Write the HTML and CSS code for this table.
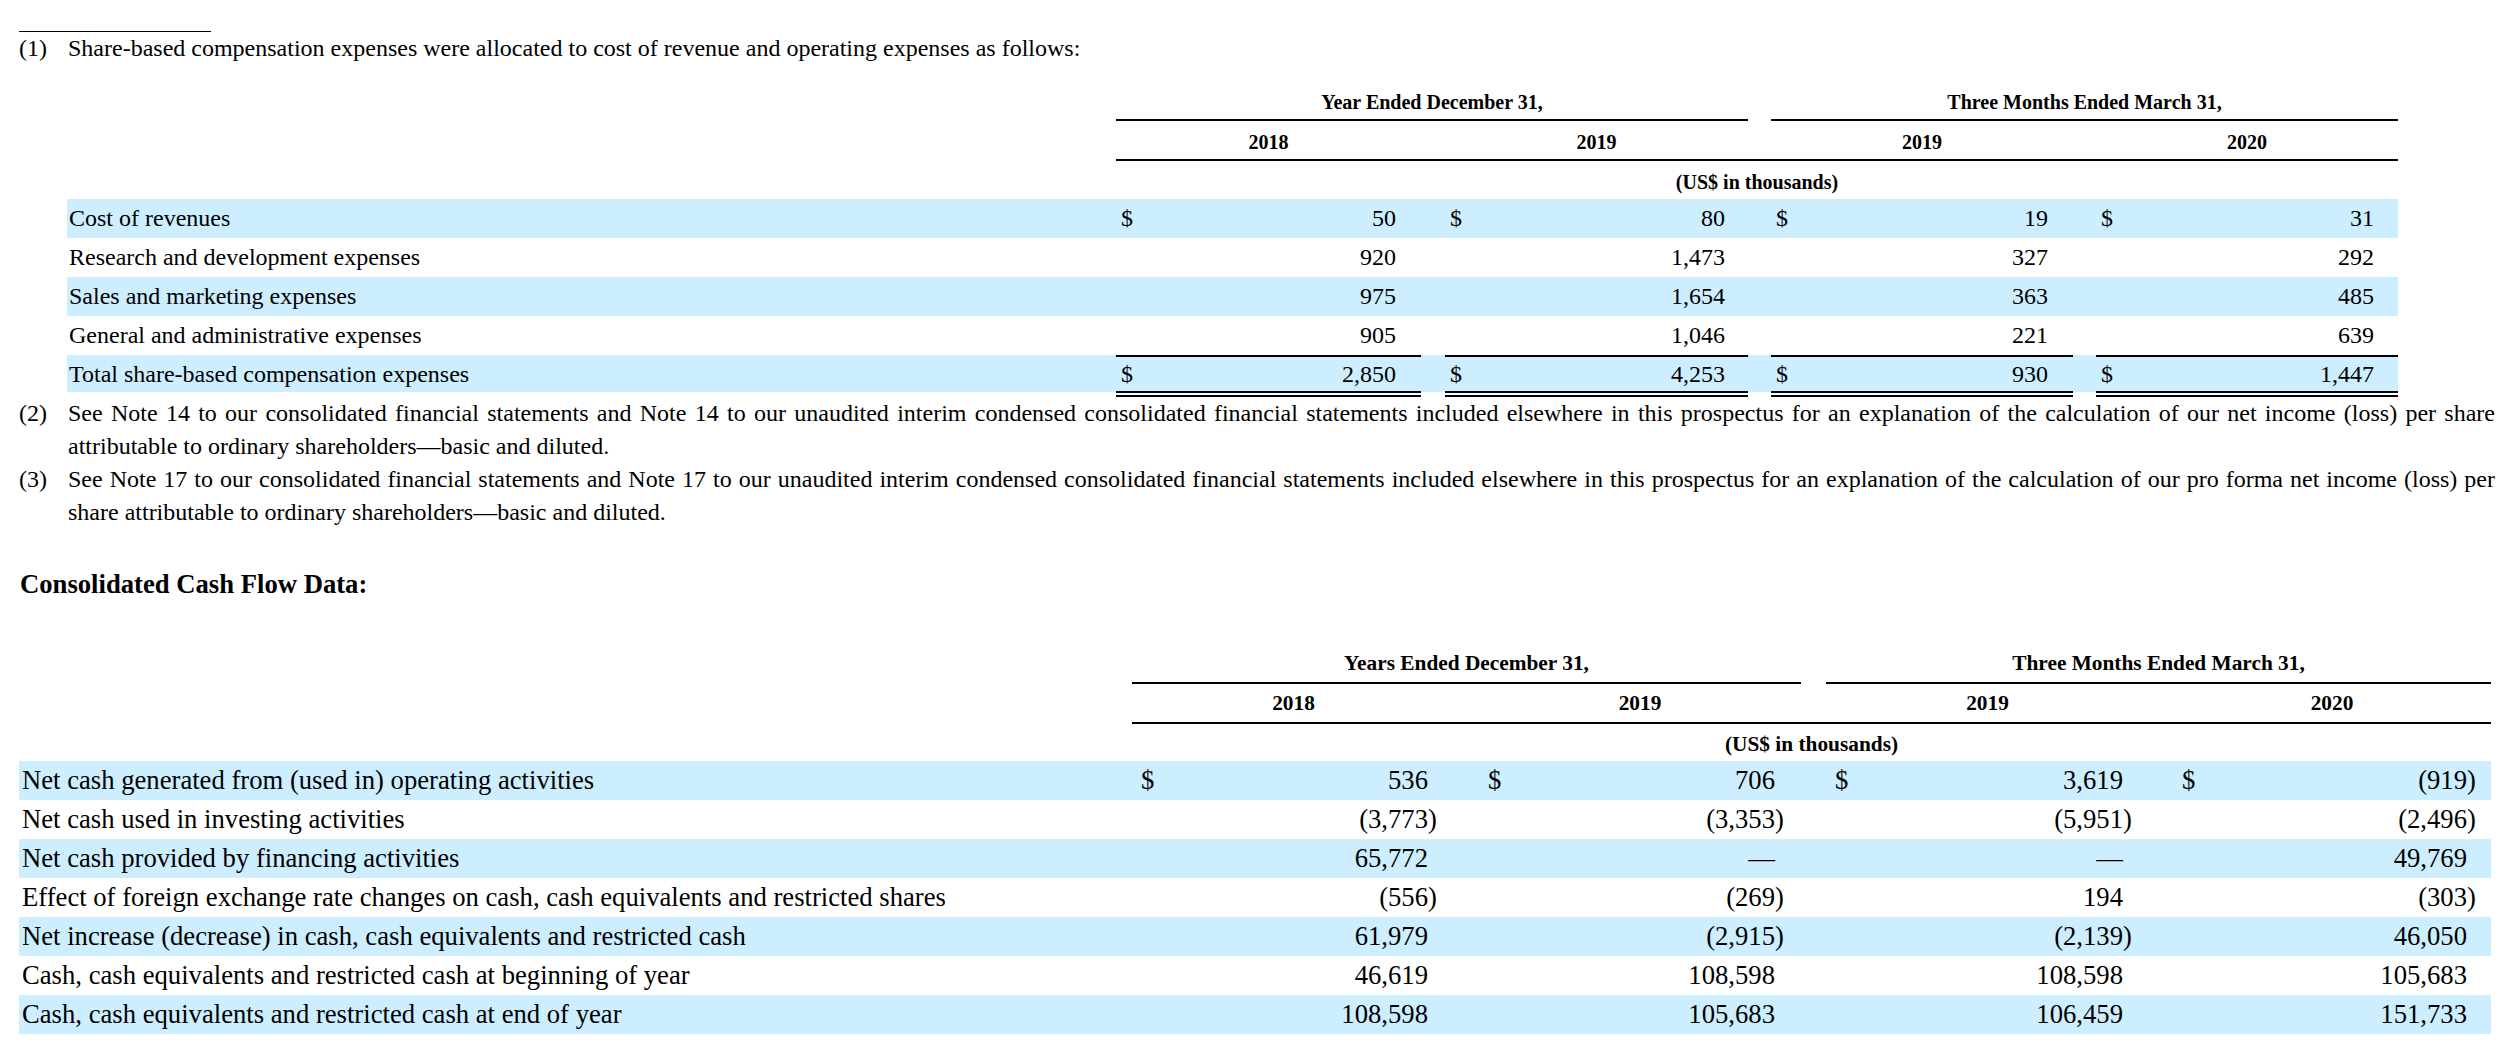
FILE: index.html
```html
<!DOCTYPE html>
<html>
<head>
<meta charset="utf-8">
<link rel="stylesheet" href="styles.css">
</head>
<body>
<div class="page">
  <div class="rule-short"></div>
  <div class="note"><div class="num">(1)</div><div class="txt">Share-based compensation expenses were allocated to cost of revenue and operating expenses as follows:</div></div>

  <div class="fin t1">
    <div class="row hrow">
      <div class="lbl"></div>
      <div class="hd g1">Year Ended December 31,</div>
      <div class="hd g2">Three Months Ended March 31,</div>
    </div>
    <div class="row hrow">
      <div class="lbl"></div>
      <div class="hd yr y1">2018</div><div class="hd yr"></div>
      <div class="hd yr y2">2019</div><div class="hd yr"></div>
      <div class="hd yr y3">2019</div><div class="hd yr"></div>
      <div class="hd yr y4">2020</div>
    </div>
    <div class="row urow">
      <div class="lbl"></div>
      <div class="hd all">(US$ in thousands)</div>
    </div>
    <div class="row band">
      <div class="lbl">Cost of revenues</div>
      <div class="amt"><span>$</span><span>50</span></div><div class="par"></div><div class="sp"></div>
      <div class="amt"><span>$</span><span>80</span></div><div class="par"></div><div class="sp"></div>
      <div class="amt"><span>$</span><span>19</span></div><div class="par"></div><div class="sp"></div>
      <div class="amt"><span>$</span><span>31</span></div><div class="par"></div>
    </div>
    <div class="row">
      <div class="lbl">Research and development expenses</div>
      <div class="amt"><span></span><span>920</span></div><div class="par"></div><div class="sp"></div>
      <div class="amt"><span></span><span>1,473</span></div><div class="par"></div><div class="sp"></div>
      <div class="amt"><span></span><span>327</span></div><div class="par"></div><div class="sp"></div>
      <div class="amt"><span></span><span>292</span></div><div class="par"></div>
    </div>
    <div class="row band">
      <div class="lbl">Sales and marketing expenses</div>
      <div class="amt"><span></span><span>975</span></div><div class="par"></div><div class="sp"></div>
      <div class="amt"><span></span><span>1,654</span></div><div class="par"></div><div class="sp"></div>
      <div class="amt"><span></span><span>363</span></div><div class="par"></div><div class="sp"></div>
      <div class="amt"><span></span><span>485</span></div><div class="par"></div>
    </div>
    <div class="row">
      <div class="lbl">General and administrative expenses</div>
      <div class="amt"><span></span><span>905</span></div><div class="par"></div><div class="sp"></div>
      <div class="amt"><span></span><span>1,046</span></div><div class="par"></div><div class="sp"></div>
      <div class="amt"><span></span><span>221</span></div><div class="par"></div><div class="sp"></div>
      <div class="amt"><span></span><span>639</span></div><div class="par"></div>
    </div>
    <div class="row band total">
      <div class="lbl">Total share-based compensation expenses</div>
      <div class="amt tot"><span>$</span><span>2,850</span></div><div class="par tot"></div><div class="sp"></div>
      <div class="amt tot"><span>$</span><span>4,253</span></div><div class="par tot"></div><div class="sp"></div>
      <div class="amt tot"><span>$</span><span>930</span></div><div class="par tot"></div><div class="sp"></div>
      <div class="amt tot"><span>$</span><span>1,447</span></div><div class="par tot"></div>
    </div>
  </div>

  <div class="note"><div class="num">(2)</div><div class="txt">See Note 14 to our consolidated financial statements and Note 14 to our unaudited interim condensed consolidated financial statements included elsewhere in this prospectus for an explanation of the calculation of our net income (loss) per share attributable to ordinary shareholders—basic and diluted.</div></div>
  <div class="note"><div class="num">(3)</div><div class="txt">See Note 17 to our consolidated financial statements and Note 17 to our unaudited interim condensed consolidated financial statements included elsewhere in this prospectus for an explanation of the calculation of our pro forma net income (loss) per share attributable to ordinary shareholders—basic and diluted.</div></div>

  <div class="section-title">Consolidated Cash Flow Data:</div>

  <div class="fin t2">
    <div class="row hrow">
      <div class="lbl"></div>
      <div class="hd g1">Years Ended December 31,</div>
      <div class="hd g2">Three Months Ended March 31,</div>
    </div>
    <div class="row hrow">
      <div class="lbl"></div>
      <div class="hd yr y1">2018</div><div class="hd yr"></div>
      <div class="hd yr y2">2019</div><div class="hd yr"></div>
      <div class="hd yr y3">2019</div><div class="hd yr"></div>
      <div class="hd yr y4">2020</div>
    </div>
    <div class="row urow">
      <div class="lbl"></div>
      <div class="hd all">(US$ in thousands)</div>
    </div>
    <div class="row band">
      <div class="lbl">Net cash generated from (used in) operating activities</div>
      <div class="amt"><span>$</span><span>536</span></div><div class="par"></div><div class="sp"></div>
      <div class="amt"><span>$</span><span>706</span></div><div class="par"></div><div class="sp"></div>
      <div class="amt"><span>$</span><span>3,619</span></div><div class="par"></div><div class="sp"></div>
      <div class="amt"><span>$</span><span>(919</span></div><div class="par">)</div>
    </div>
    <div class="row">
      <div class="lbl">Net cash used in investing activities</div>
      <div class="amt"><span></span><span>(3,773</span></div><div class="par">)</div><div class="sp"></div>
      <div class="amt"><span></span><span>(3,353</span></div><div class="par">)</div><div class="sp"></div>
      <div class="amt"><span></span><span>(5,951</span></div><div class="par">)</div><div class="sp"></div>
      <div class="amt"><span></span><span>(2,496</span></div><div class="par">)</div>
    </div>
    <div class="row band">
      <div class="lbl">Net cash provided by financing activities</div>
      <div class="amt"><span></span><span>65,772</span></div><div class="par"></div><div class="sp"></div>
      <div class="amt"><span></span><span>—</span></div><div class="par"></div><div class="sp"></div>
      <div class="amt"><span></span><span>—</span></div><div class="par"></div><div class="sp"></div>
      <div class="amt"><span></span><span>49,769</span></div><div class="par"></div>
    </div>
    <div class="row">
      <div class="lbl">Effect of foreign exchange rate changes on cash, cash equivalents and restricted shares</div>
      <div class="amt"><span></span><span>(556</span></div><div class="par">)</div><div class="sp"></div>
      <div class="amt"><span></span><span>(269</span></div><div class="par">)</div><div class="sp"></div>
      <div class="amt"><span></span><span>194</span></div><div class="par"></div><div class="sp"></div>
      <div class="amt"><span></span><span>(303</span></div><div class="par">)</div>
    </div>
    <div class="row band">
      <div class="lbl">Net increase (decrease) in cash, cash equivalents and restricted cash</div>
      <div class="amt"><span></span><span>61,979</span></div><div class="par"></div><div class="sp"></div>
      <div class="amt"><span></span><span>(2,915</span></div><div class="par">)</div><div class="sp"></div>
      <div class="amt"><span></span><span>(2,139</span></div><div class="par">)</div><div class="sp"></div>
      <div class="amt"><span></span><span>46,050</span></div><div class="par"></div>
    </div>
    <div class="row">
      <div class="lbl">Cash, cash equivalents and restricted cash at beginning of year</div>
      <div class="amt"><span></span><span>46,619</span></div><div class="par"></div><div class="sp"></div>
      <div class="amt"><span></span><span>108,598</span></div><div class="par"></div><div class="sp"></div>
      <div class="amt"><span></span><span>108,598</span></div><div class="par"></div><div class="sp"></div>
      <div class="amt"><span></span><span>105,683</span></div><div class="par"></div>
    </div>
    <div class="row band">
      <div class="lbl">Cash, cash equivalents and restricted cash at end of year</div>
      <div class="amt"><span></span><span>108,598</span></div><div class="par"></div><div class="sp"></div>
      <div class="amt"><span></span><span>105,683</span></div><div class="par"></div><div class="sp"></div>
      <div class="amt"><span></span><span>106,459</span></div><div class="par"></div><div class="sp"></div>
      <div class="amt"><span></span><span>151,733</span></div><div class="par"></div>
    </div>
  </div>
</div>
</body>
</html>
```
FILE: styles.css
```css
html, body {
  margin: 0;
  padding: 0;
  background: #ffffff;
}
body {
  font-family: "Liberation Serif", "Times New Roman", serif;
  color: #000000;
}
.page {
  padding-top: 31px;
}
.rule-short {
  margin-left: 19px;
  width: 192px;
  height: 0;
  border-top: 1px solid #000;
}
.note {
  display: grid;
  grid-template-columns: 49px 2427px;
  margin-left: 19px;
  font-size: 24px;
  line-height: 33px;
}
.note .txt {
  text-align: justify;
}
.fin .row {
  display: grid;
  align-items: stretch;
}
.fin .row > div {
  display: flex;
  align-items: center;
  box-sizing: border-box;
  white-space: nowrap;
}
.t1 {
  margin-top: 16px;
  margin-left: 67px;
  width: 2331px;
  font-size: 24px;
}
.t1 .row {
  grid-template-columns: 1049px 280px 25px 24px 280px 23px 23px 277px 25px 23px 278px 24px;
  height: 39px;
}
.t1 .hrow {
  height: 40px;
}
.t1 .urow {
  height: 38px;
}
.t1 .total {
  height: 42px;
  background: linear-gradient(#cceeff 0, #cceeff 37px, transparent 37px);
}
.t1 .hd {
  font-size: 20px;
}
.t2 {
  margin-top: 43px;
  margin-left: 19px;
  width: 2472px;
  font-size: 26.67px;
}
.t2 .row {
  grid-template-columns: 1113px 296px 27px 24px 296px 26px 25px 297px 26px 24px 294px 24px;
  height: 39px;
}
.t2 .hrow {
  height: 40px;
}
.t2 .urow {
  height: 37px;
}
.t2 .hd {
  font-size: 21.33px;
}
.fin .hd {
  font-weight: bold;
  justify-content: center;
  align-items: flex-end !important;
  padding-bottom: 5px;
}
.t2 .hrow .hd {
  padding-bottom: 6px;
}
.t2 .urow .hd {
  padding-bottom: 4px;
}
.fin .hrow .hd {
  border-bottom: 2px solid #000;
}
.fin .g1 { grid-column: 2 / 7; }
.fin .g2 { grid-column: 8 / 13; }
.fin .y1 { grid-column: 2 / 4; }
.fin .y2 { grid-column: 5 / 7; }
.fin .y3 { grid-column: 8 / 10; }
.fin .y4 { grid-column: 11 / 13; }
.fin .all { grid-column: 2 / 13; }
.t1 .lbl {
  padding-left: 2px;
}
.t1 .total .lbl {
  padding-bottom: 3px;
}
.t2 .lbl {
  padding-left: 3px;
}
.band {
  background: #cceeff;
}
.amt {
  justify-content: space-between;
  padding-left: 5px;
}
.t2 .amt {
  padding-left: 9px;
}
.par {
  justify-content: flex-start;
}
.tot {
  border-top: 2px solid #000;
  border-bottom: 6px double #000;
}
.section-title {
  margin-top: 39px;
  margin-left: 20px;
  font-size: 26.67px;
  line-height: 33px;
  font-weight: bold;
}
```
